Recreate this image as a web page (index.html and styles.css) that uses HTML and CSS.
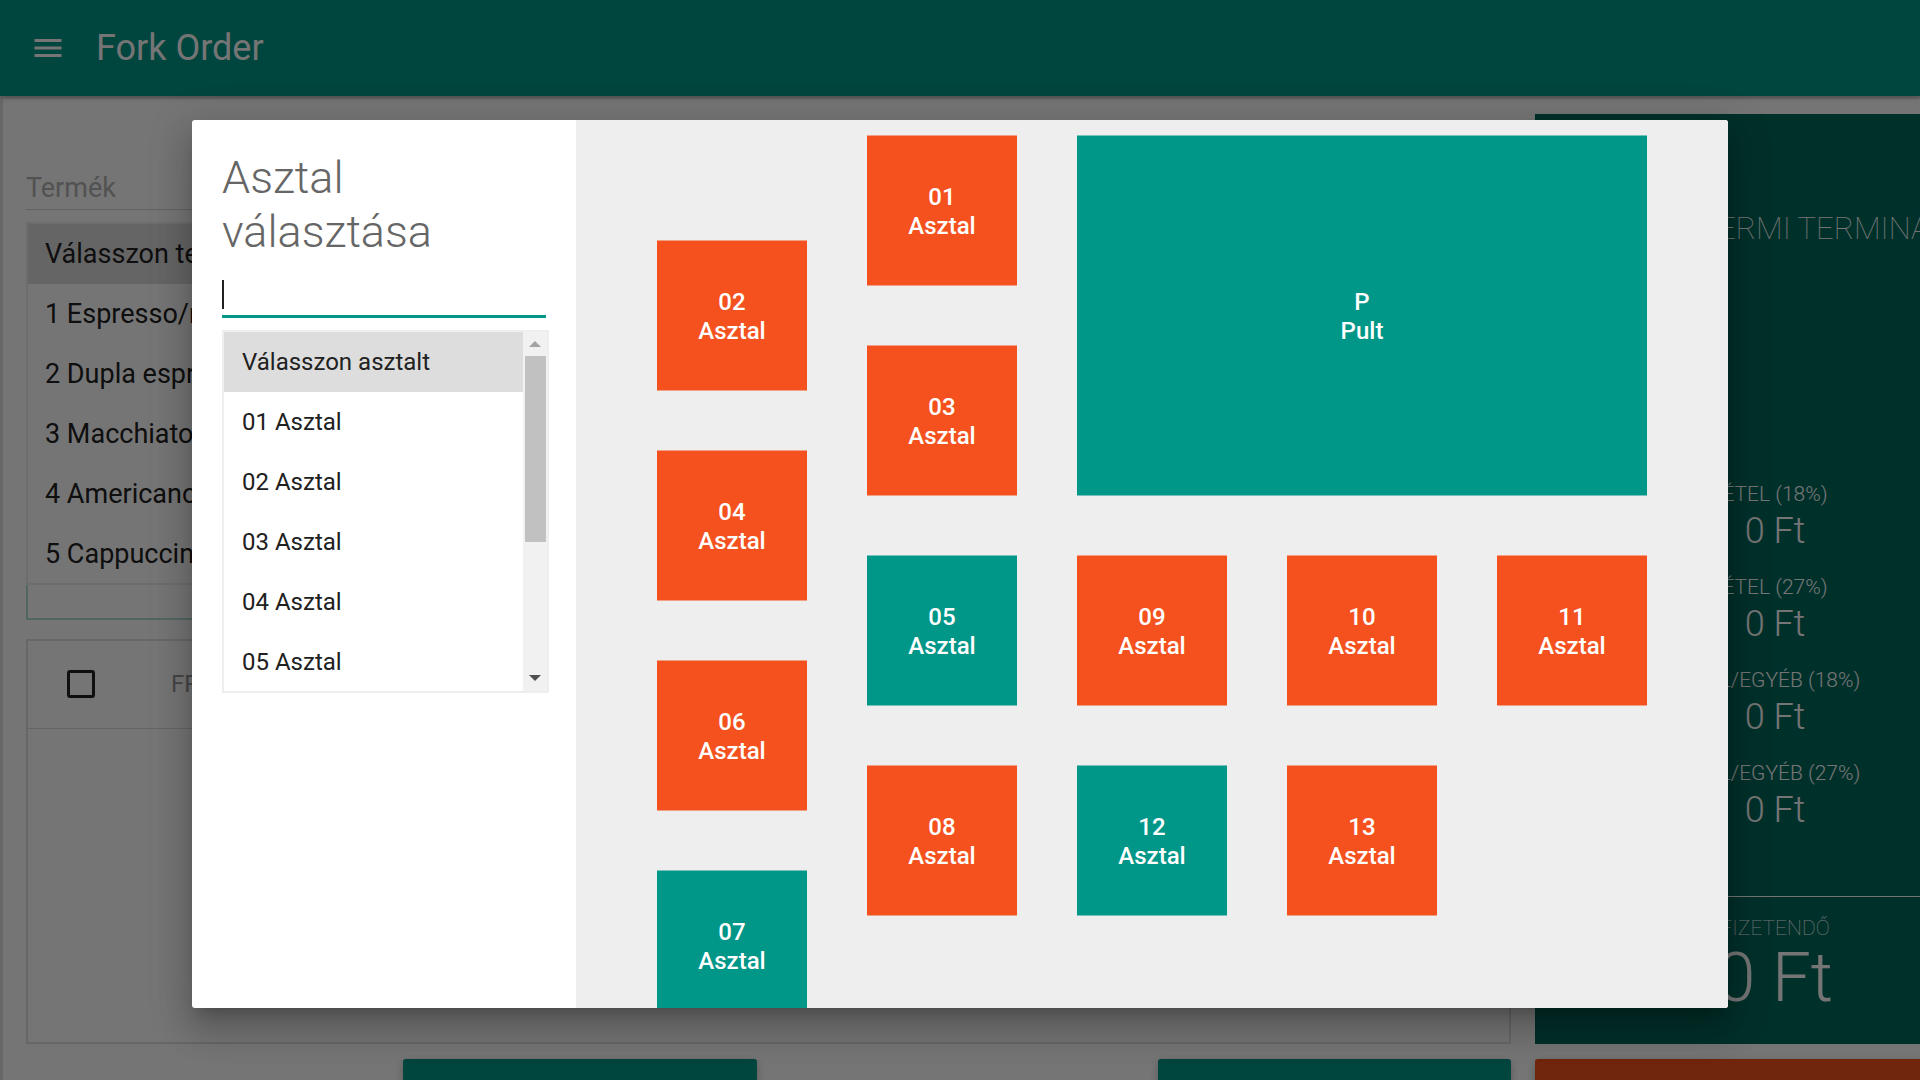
FILE: index.html
```html
<!DOCTYPE html>
<html lang="hu">
<head>
<meta charset="utf-8">
<title>Fork Order</title>
<meta name="viewport" content="width=device-width, initial-scale=1">
<link rel="stylesheet" href="styles.css">
</head>
<body>
<div class="app">
  <header class="toolbar">
    <button class="menu-button" type="button" aria-label="Menü">
      <svg width="36" height="36" viewBox="0 0 24 24" aria-hidden="true"><path fill="currentColor" d="M3 18h18v-2H3v2zm0-5h18v-2H3v2zm0-7v2h18V6H3z"/></svg>
    </button>
    <h1 class="toolbar-title">Fork Order</h1>
  </header>

  <main class="workspace">
    <section class="order">
      <input class="product-input" type="text" placeholder="Termék" aria-label="Termék">
      <ul class="options">
        <li class="option option-selected">Válasszon terméket</li>
        <li class="option">1 Espresso/ristretto</li>
        <li class="option">2 Dupla espresso</li>
        <li class="option">3 Macchiato</li>
        <li class="option">4 Americano</li>
        <li class="option">5 Cappuccino</li>
      </ul>
      <div class="chips"></div>
      <div class="order-table">
        <table>
          <thead>
            <tr>
              <th class="check-cell"><input class="check" type="checkbox" aria-label="Összes kijelölése"></th>
              <th class="name-cell">FRISSÍTVE</th>
            </tr>
          </thead>
        </table>
      </div>
    </section>

    <aside class="summary">
      <h2 class="summary-title">001 ÉTTERMI TERMINÁL</h2>
      <dl class="totals">
        <dt>ÉTEL (18%)</dt><dd>0 Ft</dd>
        <dt>ÉTEL (27%)</dt><dd>0 Ft</dd>
        <dt>ITAL/EGYÉB (18%)</dt><dd>0 Ft</dd>
        <dt>ITAL/EGYÉB (27%)</dt><dd>0 Ft</dd>
      </dl>
      <dl class="payable">
        <dt>FIZETENDŐ</dt><dd>0 Ft</dd>
      </dl>
    </aside>

    <div class="actions">
      <button class="action action-second" type="button" aria-label="Asztal"></button>
      <button class="action action-fourth" type="button" aria-label="Rögzítés"></button>
    </div>
    <button class="action action-pay" type="button" aria-label="Fizetés"></button>
  </main>
</div>

<div class="backdrop">
  <div class="dialog" role="dialog" aria-modal="true" aria-labelledby="dialog-title">
    <section class="picker">
      <h2 class="picker-title" id="dialog-title">Asztal választása</h2>
      <div class="picker-field">
        <input class="picker-input" type="text" aria-labelledby="dialog-title">
        <span class="caret"></span>
      </div>
      <div class="picker-list">
        <ul class="picker-options">
          <li class="picker-option picker-option-selected">Válasszon asztalt</li>
          <li class="picker-option">01 Asztal</li>
          <li class="picker-option">02 Asztal</li>
          <li class="picker-option">03 Asztal</li>
          <li class="picker-option">04 Asztal</li>
          <li class="picker-option">05 Asztal</li>
        </ul>
        <div class="scrollbar" aria-hidden="true">
          <svg class="arrow arrow-up" width="12" height="6" viewBox="0 0 12 6"><path d="M0 6L6 0l6 6z"/></svg>
          <div class="thumb"></div>
          <svg class="arrow arrow-down" width="12" height="6" viewBox="0 0 12 6"><path d="M0 0h12L6 6z"/></svg>
        </div>
      </div>
    </section>

    <section class="floor" aria-label="Asztalok">
      <button class="seat busy c3 r1" type="button">01<br>Asztal</button>
      <button class="seat busy c1 r2" type="button">02<br>Asztal</button>
      <button class="seat busy c3 r3" type="button">03<br>Asztal</button>
      <button class="seat busy c1 r4" type="button">04<br>Asztal</button>
      <button class="seat free c3 r5" type="button">05<br>Asztal</button>
      <button class="seat busy c1 r6" type="button">06<br>Asztal</button>
      <button class="seat free c1 r8" type="button">07<br>Asztal</button>
      <button class="seat busy c3 r7" type="button">08<br>Asztal</button>
      <button class="seat busy c5 r5" type="button">09<br>Asztal</button>
      <button class="seat busy c7 r5" type="button">10<br>Asztal</button>
      <button class="seat busy c9 r5" type="button">11<br>Asztal</button>
      <button class="seat free c5 r7" type="button">12<br>Asztal</button>
      <button class="seat busy c7 r7" type="button">13<br>Asztal</button>
      <button class="seat free counter" type="button">P<br>Pult</button>
    </section>
  </div>
</div>
</body>
</html>
```
FILE: styles.css
```css
* { box-sizing: border-box; }

body {
  margin: 0;
  height: 100vh;
  overflow: hidden;
  font-family: Roboto, "Liberation Sans", sans-serif;
  color: #212121;
  background: #fff;
}

h1, h2, ul, dl, dd { margin: 0; padding: 0; }
ul { list-style: none; }
button, input { font: inherit; }
button { border: 0; padding: 0; cursor: pointer; }

.app { height: 100vh; overflow: hidden; }

/* Toolbar */
.toolbar {
  position: relative;
  display: flex;
  align-items: center;
  gap: 30px;
  height: 96px;
  padding: 0 30px;
  background: #009688;
  color: #fff;
  box-shadow: 0 1px 6px rgba(0, 0, 0, .3);
}
.menu-button { display: flex; background: none; color: #fff; }
.toolbar-title { font-size: 36px; font-weight: 400; line-height: 48px; }

/* Order screen */
.workspace {
  display: grid;
  grid-template-columns: minmax(0, 1fr) 385px;
  gap: 15px 24px;
  padding: 15px 0 0 23px;
  border-top: 3px solid #e0e0e0;
  border-left: 3px solid #e0e0e0;
}
.order { display: flex; flex-direction: column; }
.product-input {
  height: 96px;
  padding: 52px 0 0;
  border: 0;
  border-bottom: 1px solid #d5d5d5;
  background: none;
  font-size: 27px;
}
.product-input::placeholder { color: #b3b3b3; }
.options {
  height: 363px;
  margin-top: 12px;
  border: 2px solid #eee;
  overflow: hidden;
}
.option {
  height: 60px;
  padding: 0 17px;
  line-height: 60px;
  font-size: 27px;
}
.option-selected { background: #ddd; }
.chips {
  height: 35px;
  border: 2px solid #b2dfdb;
  border-top: 0;
}
.order-table {
  height: 405px;
  margin-top: 19px;
  border: 2px solid #e0e0e0;
}
table { width: 100%; border-collapse: collapse; }
th {
  height: 87px;
  padding: 0;
  border-bottom: 1px solid #ddd;
  text-align: left;
  font-size: 24px;
  font-weight: 400;
  color: #999;
}
.check-cell { width: 143px; padding-left: 39px; }
.check {
  appearance: none;
  display: block;
  width: 28px;
  height: 28px;
  margin: 0;
  border: 3px solid #212121;
  border-radius: 3px;
}

/* Totals */
.summary {
  display: flex;
  flex-direction: column;
  width: 480px;
  padding: 91px 0 32px;
  background: #00695c;
  color: #fff;
  text-align: center;
}
.summary-title {
  font-size: 31px;
  font-weight: 100;
  line-height: 48px;
  white-space: nowrap;
}
.totals { margin-top: auto; padding-bottom: 45px; font-weight: 300; }
.totals dt { font-size: 21px; line-height: 30px; }
.totals dd { font-size: 36px; line-height: 44px; margin-bottom: 19px; }
.payable { padding-top: 17px; border-top: 1px solid #fff; }
.payable dt { font-size: 21px; line-height: 29px; font-weight: 100; }
.payable dd { font-size: 69px; line-height: 69px; font-weight: 300; }

/* Bottom actions */
.actions {
  display: grid;
  grid-template-columns: repeat(4, 1fr);
  gap: 24px;
}
.action {
  height: 72px;
  border-radius: 3px;
  background: #009688;
  box-shadow: 0 3px 8px rgba(0, 0, 0, .26);
}
.action-second { grid-column: 2; }
.action-fourth { grid-column: 4; }
.action-pay { width: 480px; background: #f4511e; }

/* Table picker */
.backdrop {
  position: absolute;
  inset: 0;
  display: flex;
  padding: 120px 10% 72px;
  background: rgba(0, 0, 0, .54);
}
.dialog {
  display: flex;
  flex: 1;
  min-width: 0;
  overflow: hidden;
  border-radius: 3px;
  background: #fff;
  box-shadow:
    0 12px 14px -8px rgba(0, 0, 0, .2),
    0 23px 33px 3px rgba(0, 0, 0, .14),
    0 9px 42px 8px rgba(0, 0, 0, .12);
}
.picker { flex: 0 0 25%; padding: 31px 30px 30px; }
.picker-title {
  font-size: 45px;
  font-weight: 300;
  line-height: 54px;
  color: #666;
}
.picker-field { position: relative; margin-top: 14px; }
.picker-input {
  display: block;
  width: 100%;
  height: 45px;
  padding: 0;
  border: 0;
  border-bottom: 3px solid #009688;
  outline: 0;
  background: none;
  font-size: 24px;
}
.caret {
  position: absolute;
  left: 0;
  top: 7px;
  width: 2px;
  height: 29px;
  background: #212121;
}
.picker-list {
  display: flex;
  height: 363px;
  margin: 12px -3px 0 0;
  border: 2px solid #eee;
  overflow: hidden;
}
.picker-options { flex: 1; }
.picker-option {
  height: 60px;
  padding: 0 18px;
  line-height: 60px;
  font-size: 24px;
}
.picker-option-selected { background: #ddd; }
.scrollbar {
  display: flex;
  flex-direction: column;
  align-items: center;
  width: 24px;
  padding: 9px 0 10px;
  background: #f1f1f1;
}
.arrow { display: block; }
.arrow-up { fill: #a3a3a3; }
.arrow-down { fill: #505050; margin-top: auto; }
.thumb {
  width: 21px;
  height: 186px;
  margin-top: 9px;
  background: #c1c1c1;
}

/* Floor plan: a table covers two tracks of 45px and the 60px gap between them */
.floor {
  flex: 1;
  display: grid;
  grid-template-columns: repeat(10, 45px);
  grid-auto-rows: 45px;
  gap: 60px;
  padding: 15px 81px 0;
  overflow: hidden;
  background: #eee;
}
.seat {
  grid-row-end: span 2;
  grid-column-end: span 2;
  margin-bottom: -1px;
  padding-top: 2px;
  border: solid transparent;
  border-width: 1px 0;
  background-clip: padding-box;
  color: #fff;
  font-size: 24px;
  font-weight: 500;
  line-height: 29px;
}
.busy { background-color: #f4511e; border-color: rgba(244, 81, 30, .5); }
.free { background-color: #009688; border-color: rgba(0, 150, 136, .5); }
.counter { grid-area: 1 / 5 / span 4 / span 6; }
.c1 { grid-column-start: 1; }
.c3 { grid-column-start: 3; }
.c5 { grid-column-start: 5; }
.c7 { grid-column-start: 7; }
.c9 { grid-column-start: 9; }
.r1 { grid-row-start: 1; }
.r2 { grid-row-start: 2; }
.r3 { grid-row-start: 3; }
.r4 { grid-row-start: 4; }
.r5 { grid-row-start: 5; }
.r6 { grid-row-start: 6; }
.r7 { grid-row-start: 7; }
.r8 { grid-row-start: 8; }
```
